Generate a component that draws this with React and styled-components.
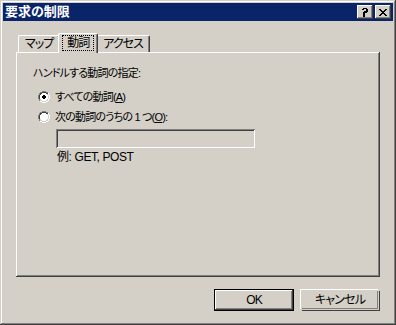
import React from 'react';
import styled, { createGlobalStyle } from 'styled-components';

const face = '#D4D0C8';
const shadow = '#808080';
const darkShadow = '#404040';
const highlight = '#FFFFFF';
const titleBlue = '#0A246A';

const uiFont = `"Liberation Sans", "Noto Sans CJK JP", sans-serif`;

const GlobalStyle = createGlobalStyle`
  html, body {
    margin: 0;
    padding: 0;
    background: ${face};
  }
  body {
    font-family: ${uiFont};
    font-size: 11px;
    font-feature-settings: "palt" 1;
    letter-spacing: -0.8px;
    color: #000;
  }
`;

const Window = styled.div`
  width: 396px;
  height: 325px;
  box-sizing: border-box;
  padding: 3px;
  background: ${face};
  box-shadow:
    inset -1px -1px ${darkShadow},
    inset 1px 1px ${face},
    inset -2px -2px ${shadow},
    inset 2px 2px ${highlight};
  display: flex;
  flex-direction: column;
`;

const TitleBar = styled.div`
  height: 18px;
  background: ${titleBlue};
  display: flex;
  align-items: center;
  justify-content: space-between;
  padding: 0 2px 0 2px;
`;

const Title = styled.span`
  color: #fff;
  font-weight: bold;
  font-size: 13px;
  line-height: 18px;
  letter-spacing: 0;
`;

const CaptionButtons = styled.div`
  display: flex;
  gap: 2px;
`;

const CaptionButton = styled.div`
  width: 16px;
  height: 14px;
  box-sizing: border-box;
  background: ${face};
  box-shadow:
    inset -1px -1px ${darkShadow},
    inset 1px 1px ${highlight},
    inset -2px -2px ${shadow};
  display: flex;
  align-items: center;
  justify-content: center;
`;

const Body = styled.div`
  flex: 1;
  display: flex;
  flex-direction: column;
  padding: 12px 13px 0 13px;
`;

const TabStrip = styled.div`
  height: 19px;
  display: flex;
  align-items: flex-end;
  padding-left: 2px;
  position: relative;
  z-index: 1;
`;

const Tab = styled.div`
  box-sizing: border-box;
  height: ${(p) => (p.$active ? '20px' : '17px')};
  margin: ${(p) => (p.$active ? '0 -2px -1px -2px' : '0')};
  padding: ${(p) => (p.$active ? '2px 4px 0 4px' : '1px 2px 0 2px')};
  background: ${face};
  border-top: 1px solid ${highlight};
  border-left: 1px solid ${highlight};
  border-right: 1px solid ${darkShadow};
  box-shadow: inset -1px 0 ${shadow};
  border-top-left-radius: 2px;
  border-top-right-radius: 2px;
  position: relative;
  z-index: ${(p) => (p.$active ? 2 : 1)};
  display: flex;
  align-items: flex-start;
`;

const TabLabel = styled.span`
  display: block;
  padding: 0 4px;
  line-height: 14px;
  font-size: 12px;
  letter-spacing: -1px;
  outline: ${(p) => (p.$focused ? '1px dotted #000' : 'none')};
`;

const Panel = styled.div`
  height: 225px;
  box-sizing: border-box;
  background: ${face};
  box-shadow:
    inset -1px -1px ${darkShadow},
    inset 1px 1px ${highlight},
    inset -2px -2px ${shadow};
  padding: 14px 17px;
  display: flex;
  flex-direction: column;
`;

const GroupLabel = styled.div`
  line-height: 14px;
`;

const RadioList = styled.div`
  margin-top: 10px;
  padding-left: 5px;
  display: flex;
  flex-direction: column;
  gap: 6px;
`;

const RadioRow = styled.label`
  display: flex;
  align-items: center;
  gap: 5px;
  height: 14px;
  line-height: 14px;
  white-space: pre;
`;

const Mnemonic = styled.span`
  text-decoration: underline;
`;

const Indented = styled.div`
  padding-left: 23px;
  display: flex;
  flex-direction: column;
`;

const TextBox = styled.div`
  margin-top: 5px;
  width: 199px;
  height: 19px;
  box-sizing: border-box;
  background: ${face};
  box-shadow:
    inset 1px 1px ${shadow},
    inset -1px -1px ${highlight},
    inset 2px 2px ${darkShadow},
    inset -2px -2px ${face};
`;

const Hint = styled.div`
  margin-top: 2px;
  padding-left: 1px;
  line-height: 14px;
  font-size: 12px;
  letter-spacing: -0.4px;
`;

const Footer = styled.div`
  margin-top: 12px;
  display: flex;
  justify-content: flex-end;
  gap: 6px;
`;

const Button = styled.div`
  width: 80px;
  height: 22px;
  box-sizing: border-box;
  background: ${face};
  border: 1px solid ${(p) => (p.$default ? '#000' : face)};
  box-shadow: ${(p) =>
    p.$default
      ? `inset -1px -1px ${darkShadow}, inset 1px 1px ${highlight}, inset -2px -2px ${shadow}`
      : `-1px -1px ${highlight}, 1px 1px ${darkShadow}, inset -1px -1px ${shadow}`};
  ${(p) => (p.$default ? '' : 'width: 78px; height: 20px; margin: 1px 1px 1px 1px;')}
  display: flex;
  align-items: center;
  justify-content: center;
  line-height: 14px;
  font-size: 12px;
`;

const Radio = ({ checked }) => (
  <svg width="12" height="12" viewBox="0 0 12 12" shapeRendering="crispEdges">
    <path d="M4 0h4v1h2v1h-6v-1h-0zM2 1h2v1h-2zM1 2h1v2h-1zM0 4h1v4h-1zM1 8h1v2h-1z" fill={shadow} />
    <path d="M4 1h4v1h-4zM2 2h2v1h-2zM8 2h2v1h-2zM1 4h1v4h-1zM2 3h1v1h-1z" fill={darkShadow} />
    <path d="M10 2h1v2h-1zM11 4h1v4h-1zM10 8h1v2h-1zM8 10h2v1h-2zM2 10h2v1h-2zM4 11h4v1h-4zM8 10h2v1h-2z" fill={highlight} />
    <path d="M9 3h1v1h-1zM10 4h1v4h-1zM9 8h1v1h-1zM8 9h1v1h-4v-1h3zM2 8h1v1h-1zM4 10h4v1h-4z" fill={face} />
    <path d="M4 2h4v1h1v1h1v4h-1v1h-1v1h-4v-1h-1v-1h-1v-4h1v-1h1z" fill={highlight} />
    {checked && <path d="M5 4h2v1h1v2h-1v1h-2v-1h-1v-2h1z" fill="#000" />}
  </svg>
);

const HelpGlyph = () => (
  <svg width="8" height="9" viewBox="0 0 8 9" shapeRendering="crispEdges">
    <path d="M1 1h1v-1h4v1h1v3h-1v1h-2v2h-2v-3h1v-1h2v-2h-2v1h-2z M2 7h2v2h-2z" fill="#000" />
  </svg>
);

const CloseGlyph = () => (
  <svg width="8" height="7" viewBox="0 0 8 7" shapeRendering="crispEdges">
    <path d="M0 0h2v1h1v1h2v-1h1v-1h2v1h-1v1h-1v1h-1v1h1v1h1v1h1v1h-2v-1h-1v-1h-2v1h-1v1h-2v-1h1v-1h1v-1h1v-1h-1v-1h-1v-1h-1z" fill="#000" />
  </svg>
);

export default function App() {
  return (
    <>
      <GlobalStyle />
      <Window>
        <TitleBar>
          <Title>要求の制限</Title>
          <CaptionButtons>
            <CaptionButton><HelpGlyph /></CaptionButton>
            <CaptionButton><CloseGlyph /></CaptionButton>
          </CaptionButtons>
        </TitleBar>
        <Body>
          <TabStrip>
            <Tab><TabLabel>マップ</TabLabel></Tab>
            <Tab $active><TabLabel $focused>動詞</TabLabel></Tab>
            <Tab><TabLabel>アクセス</TabLabel></Tab>
          </TabStrip>
          <Panel>
            <GroupLabel>ハンドルする動詞の指定:</GroupLabel>
            <RadioList>
              <RadioRow>
                <Radio checked />
                <span>すべての動詞(<Mnemonic>A</Mnemonic>)</span>
              </RadioRow>
              <RadioRow>
                <Radio />
                <span>次の動詞のうちの 1 つ(<Mnemonic>O</Mnemonic>):</span>
              </RadioRow>
            </RadioList>
            <Indented>
              <TextBox />
              <Hint>例: GET, POST</Hint>
            </Indented>
          </Panel>
          <Footer>
            <Button $default>OK</Button>
            <Button>キャンセル</Button>
          </Footer>
        </Body>
      </Window>
    </>
  );
}
